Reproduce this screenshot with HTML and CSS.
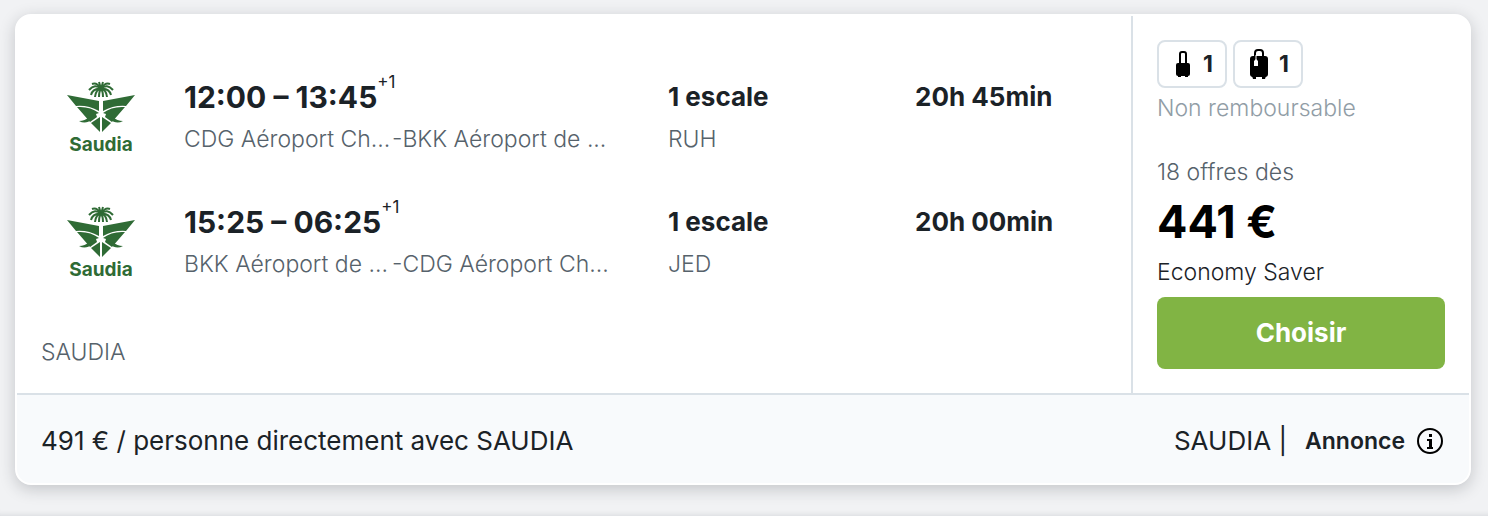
FILE: index.html
```html
<!DOCTYPE html>
<html lang="fr">
<head>
    <meta charset="UTF-8">
    <meta name="viewport" content="width=device-width, initial-scale=1.0">
    <title>Vols Paris - Bangkok</title>
    <link rel="stylesheet" href="styles.css">
</head>
<body>
    <!-- Shared drawings -->
    <svg class="defs" aria-hidden="true">
        <symbol id="saudia" viewBox="0 0 70 54">
            <!-- wings -->
            <path d="M1 15 L33 21 V31 Q22 25 10 26 Z"/>
            <path d="M69 15 L37 21 V31 Q48 25 60 26 Z"/>
            <path d="M11 27 Q24 26 33 33 L30 34 L31 37 L24 42 Z"/>
            <path d="M59 27 Q46 26 37 33 L40 34 L39 37 L46 42 Z"/>
            <path d="M34 37 V52 L25 43 Z"/>
            <path d="M36 37 V52 L45 43 Z"/>
            <path d="M13 41 Q19 41 23 37 L26 39 Q20 45 13 41 Z"/>
            <path d="M57 41 Q51 41 47 37 L44 39 Q50 45 57 41 Z"/>
            <!-- palm -->
            <g class="fronds">
                <path d="M35 9 Q31 2 26 4"/>
                <path d="M35 9 Q29 3 23 10"/>
                <path d="M35 9 Q27 8 25 15"/>
                <path d="M35 9 Q30 9 29 17"/>
                <path d="M35 9 Q33 11 33 17"/>
                <path d="M35 9 L33 2"/>
                <path d="M35 9 L37 2"/>
                <path d="M35 9 Q39 2 44 4"/>
                <path d="M35 9 Q41 3 47 10"/>
                <path d="M35 9 Q43 8 45 15"/>
                <path d="M35 9 Q40 9 41 17"/>
                <path d="M35 9 Q37 11 37 17"/>
            </g>
        </symbol>
    </svg>

    <article class="card">
        <div class="offer">
            <section class="flights">
                <div class="leg">
                    <div class="airline">
                        <svg class="wings" aria-hidden="true"><use href="#saudia"/></svg>
                        <span>Saudia</span>
                    </div>
                    <div>
                        <div class="main time">12:00 – 13:45<sup>+1</sup></div>
                        <div class="sub"><span class="from">CDG Aéroport Ch...</span><span>-BKK Aéroport de ...</span></div>
                    </div>
                    <div>
                        <div class="main">1 escale</div>
                        <div class="sub">RUH</div>
                    </div>
                    <div class="main">20h 45min</div>
                </div>
                <div class="leg">
                    <div class="airline">
                        <svg class="wings" aria-hidden="true"><use href="#saudia"/></svg>
                        <span>Saudia</span>
                    </div>
                    <div>
                        <div class="main time">15:25 – 06:25<sup>+1</sup></div>
                        <div class="sub"><span class="from">BKK Aéroport de ...</span><span>-CDG Aéroport Ch...</span></div>
                    </div>
                    <div>
                        <div class="main">1 escale</div>
                        <div class="sub">JED</div>
                    </div>
                    <div class="main">20h 00min</div>
                </div>
                <div class="operator">SAUDIA</div>
            </section>

            <section class="booking">
                <div class="bags">
                    <div class="bag">
                        <svg width="24" height="32" viewBox="0 0 24 32" aria-hidden="true">
                            <path d="M9 16 V6 Q9 4 11 4 H13 Q15 4 15 6 V16" fill="none" stroke="#000" stroke-width="2"/>
                            <rect x="5" y="15" width="14" height="13" rx="2"/>
                            <path d="M7 27 h3 v2 h-3z M14 27 h3 v2 h-3z"/>
                        </svg>
                        <span>1</span>
                    </div>
                    <div class="bag">
                        <svg width="24" height="32" viewBox="0 0 24 32" aria-hidden="true">
                            <path d="M8 8 V5 Q8 2 11 2 H13 Q16 2 16 5 V8" fill="none" stroke="#000" stroke-width="2"/>
                            <rect x="3" y="8" width="18" height="21" rx="3"/>
                            <path d="M5 28 h4 v3 h-3z M15 28 h4 l-1 3 h-3z"/>
                            <path d="M9 7 V13" stroke="#fff" stroke-width="1"/>
                            <path d="M7 13 L9 11 L11 13 V18 H7 Z" fill="#fff"/>
                        </svg>
                        <span>1</span>
                    </div>
                </div>
                <div class="refund">Non remboursable</div>
                <div class="count">18 offres dès</div>
                <div class="price">441 €</div>
                <div class="fare">Economy Saver</div>
                <button class="choose" type="button">Choisir</button>
            </section>
        </div>

        <footer class="ad">
            <span>491 € / personne directement avec SAUDIA</span>
            <div class="sponsor">
                <span>SAUDIA |</span>
                <div class="label">
                    <strong>Annonce</strong>
                    <svg width="26" height="26" viewBox="0 0 26 26" aria-hidden="true">
                        <circle cx="13" cy="13" r="12" fill="none" stroke="#000" stroke-width="2"/>
                        <path d="M12 6h3v3h-3z M10 11h5v8h1v2h-6v-2h2v-6h-2z"/>
                    </svg>
                </div>
            </div>
        </footer>
    </article>
</body>
</html>
```

FILE: styles.css
```css
body {
    margin: 0;
    padding: 14px 17px 0 15px;
    box-sizing: border-box;
    min-height: 100vh;
    font-family: Inter, "Liberation Sans", sans-serif;
    font-size: 23px;
    font-weight: 300;
    line-height: 32px;
    color: #1b2227;
    background-color: #f1f2f4;
    box-shadow: inset 0 -6px 6px -6px rgba(30, 35, 45, 0.15);
}

.defs {
    display: none;
}

/* Result card */
.card {
    border: 2px solid #fff;
    border-radius: 16px;
    background-color: #fff;
    box-shadow: 0 4px 16px rgba(30, 35, 45, 0.22);
}

.offer {
    display: flex;
    border-bottom: 2px solid #dae1e7;
}

/* Flights */
.flights {
    flex: 1;
    display: flex;
    flex-direction: column;
    padding: 63px 24px 25px;
}

.leg {
    display: grid;
    grid-template-columns: 118px 484fr 247fr 192fr;
    margin-left: 25px;
    height: 125px;
}

.airline {
    display: flex;
    flex-direction: column;
    align-items: center;
    width: 70px;
    padding-top: 1px;
    font-size: 19px;
    font-weight: 700;
    line-height: 22px;
    color: #2f6b35;
}

.wings {
    width: 70px;
    height: 54px;
    fill: #2f6b35;
}

.fronds {
    fill: none;
    stroke: #2f6b35;
    stroke-width: 2;
}

.main {
    height: 44px;
    font-size: 26px;
    font-weight: 700;
    line-height: 36px;
}

.time {
    font-size: 30px;
}

.time sup {
    font-size: 17px;
    font-weight: 400;
    line-height: 0;
    vertical-align: 20px;
}

.sub,
.operator {
    color: #56626b;
    white-space: nowrap;
}

.from {
    display: inline-block;
    min-width: 208px;
}

.operator {
    margin-top: auto;
}

/* Booking column */
.booking {
    width: 288px;
    padding: 24px;
    border-left: 2px solid #dae1e7;
}

.bags {
    display: flex;
    gap: 6px;
}

.bag {
    display: flex;
    align-items: center;
    justify-content: center;
    gap: 8px;
    box-sizing: border-box;
    width: 70px;
    height: 48px;
    border: 2px solid #dae1e7;
    border-radius: 8px;
    font-weight: 700;
}

.refund {
    margin-top: 4px;
    color: #919da6;
}

.count {
    margin-top: 32px;
    color: #56626b;
}

.price {
    margin: 8px 0;
    font-size: 45px;
    font-weight: 700;
    line-height: 52px;
    color: #000;
}

.choose {
    width: 100%;
    height: 72px;
    margin-top: 9px;
    border: 0;
    border-radius: 8px;
    font: inherit;
    font-size: 26px;
    font-weight: 700;
    color: #fff;
    background-color: #81b444;
}

/* Sponsored line */
.ad {
    display: flex;
    justify-content: space-between;
    align-items: center;
    height: 88px;
    padding: 4px 26px 0 24px;
    box-sizing: border-box;
    border-radius: 0 0 14px 14px;
    font-size: 26px;
    font-weight: 400;
    background-color: #f8fafc;
}

.sponsor {
    display: flex;
    align-items: center;
    gap: 18px;
}

.label {
    display: flex;
    align-items: center;
    gap: 12px;
}

.label strong {
    font-size: 23px;
    font-weight: 600;
}
```
